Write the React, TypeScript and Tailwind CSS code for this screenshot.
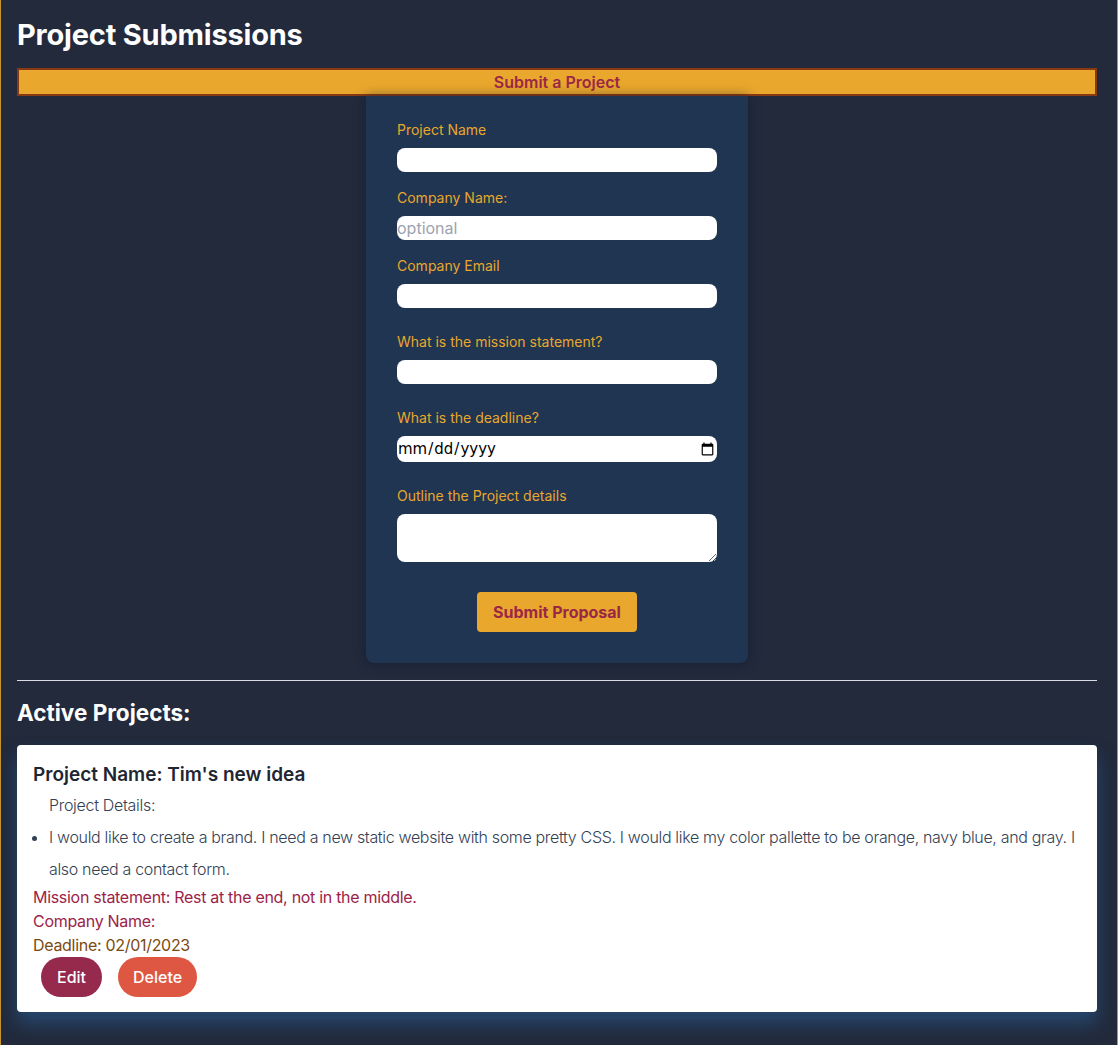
import React from "react";

export default function App() {
  const font = { fontFamily: "Inter, 'Noto Sans', sans-serif" };
  const label = "block text-sm leading-5 font-normal text-[#e9a72d] mb-2";
  return (
    <div
      style={font}
      className="min-h-screen w-[1118px] bg-[#222a3c] border-l border-r border-[#c8952d] pl-4 pr-5 pt-[17px] pb-8"
    >
      <h1 className="text-[29px] leading-[36px] font-bold text-white tracking-[-0.2px]">
        Project Submissions
      </h1>
      <div className="mt-[15px] h-[28px] border-2 border-[#8a3a12] bg-[#e9a72d] flex items-center justify-center">
        <span className="text-base font-semibold text-[#9b2747]">Submit a Project</span>
      </div>

      <div className="mx-auto w-[382px] bg-[#1f3551] rounded-b-lg px-[31px] pt-6 pb-[31px] shadow-[0_0_12px_rgba(10,20,40,0.5)]">
        <label className={label}>Project Name</label>
        <input type="text" className="block w-full h-6 rounded-lg bg-white outline-none" />

        <label className={label + " mt-4"}>Company Name:</label>
        <input
          type="text"
          placeholder="optional"
          className="block w-full h-6 rounded-lg bg-white outline-none text-base placeholder:text-[#9ca3af]"
        />

        <label className={label + " mt-4"}>Company Email</label>
        <input type="email" className="block w-full h-6 rounded-lg bg-white outline-none" />

        <label className={label + " mt-6"}>What is the mission statement?</label>
        <input type="text" className="block w-full h-6 rounded-lg bg-white outline-none" />

        <label className={label + " mt-6"}>What is the deadline?</label>
        <input
          type="date"
          className="block w-full h-[26px] rounded-lg bg-white outline-none text-base text-black"
          style={{ fontFamily: "'DejaVu Sans', sans-serif", fontSize: "15px" }}
        />

        <label className={label + " mt-6"}>Outline the Project details</label>
        <textarea className="block w-full h-12 rounded-lg bg-white outline-none" />

        <div className="flex justify-center mt-[30px]">
          <button className="w-40 h-10 rounded bg-[#e9a72d] text-base font-bold text-[#9b2747]">
            Submit Proposal
          </button>
        </div>
      </div>

      <hr className="mt-[17px] border-0 h-px bg-[#d9dde3]" />

      <h2 className="mt-4 text-[22.5px] leading-8 font-bold text-white">Active Projects:</h2>

      <div className="mt-4 bg-white rounded px-4 pt-4 pb-[15px] shadow-[0_12px_18px_rgba(40,95,150,0.55)]">
        <h3 className="text-[19px] leading-7 font-semibold text-[#1f2633]">Project Name: Tim's new idea</h3>
        <p className="mt-1 pl-4 text-base leading-6 font-light tracking-[-0.3px] text-[#334155]">Project Details:</p>
        <ul className="mt-1 list-disc pl-4 text-base leading-8 font-light tracking-[-0.33px] text-[#334155]">
          <li>
            I would like to create a brand. I need a new static website with some pretty CSS. I would like my color
            pallette to be orange, navy blue, and gray. I also need a contact form.
          </li>
        </ul>
        <div className="tracking-[-0.3px]">
          <p className="text-base leading-6 text-[#9b2348]">Mission statement: Rest at the end, not in the middle.</p>
          <p className="text-base leading-6 text-[#9b2348]">Company Name:</p>
          <p className="text-base leading-6 text-[#7a4a12]">Deadline: 02/01/2023</p>
        </div>
        <div className="flex gap-4 ml-2">
          <button className="h-10 px-4 rounded-full bg-[#952a4d] text-white text-base font-medium">Edit</button>
          <button className="h-10 px-[15px] rounded-full bg-[#de5743] text-white text-base font-medium">Delete</button>
        </div>
      </div>
    </div>
  );
}
